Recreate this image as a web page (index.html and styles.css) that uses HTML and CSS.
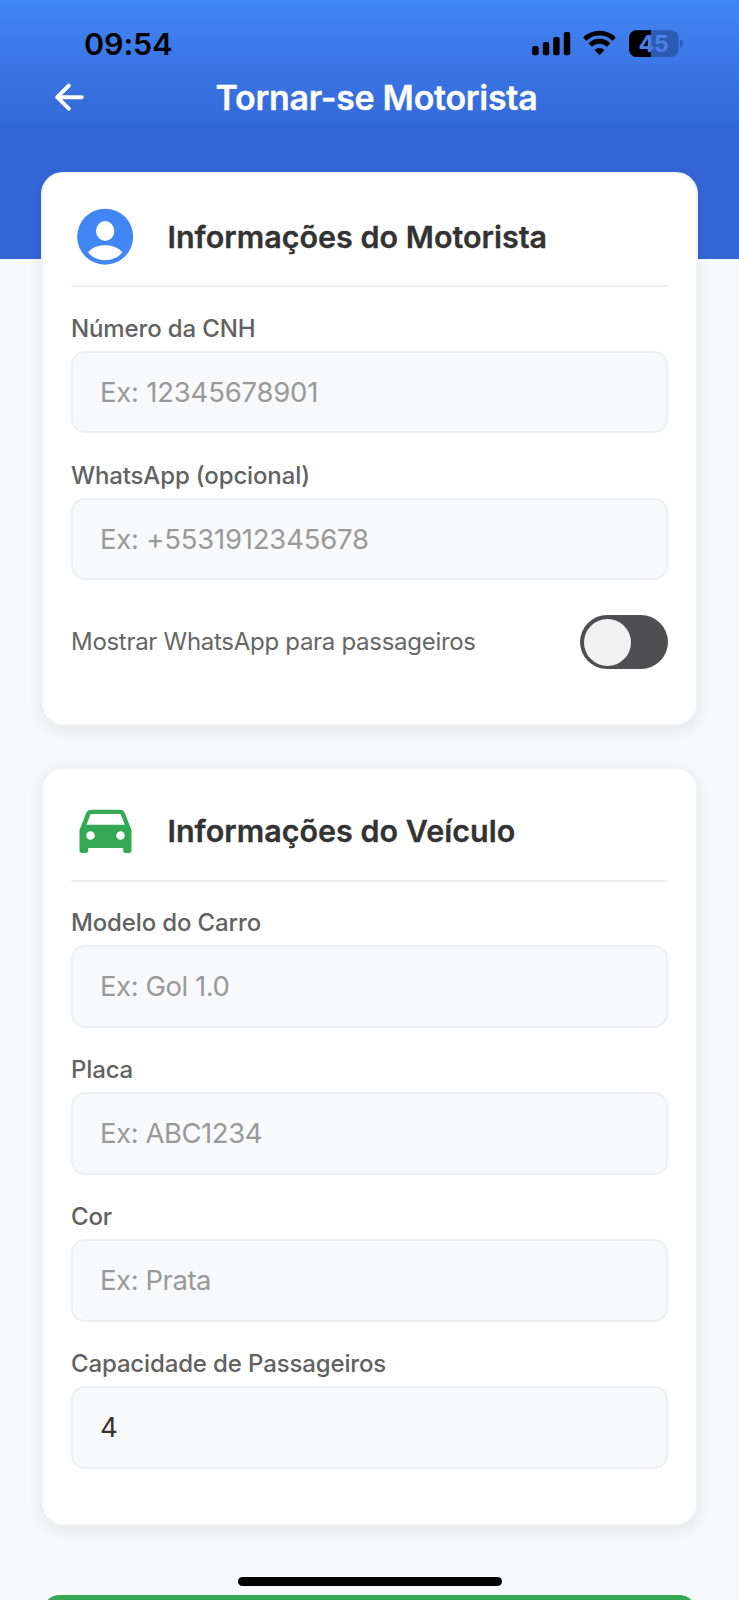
FILE: index.html
```html
<!DOCTYPE html>
<html lang="pt-BR">
<head>
<meta charset="utf-8">
<title>Tornar-se Motorista</title>
<link rel="stylesheet" href="styles.css">
</head>
<body>
<div class="screen">
  <header class="header">
    <div class="status">
      <span class="time">09:54</span>
      <svg class="status-icons" viewBox="532 30 152 28" width="152" height="28">
        <rect x="532.2" y="46" width="6.4" height="9.3" rx="2"/>
        <rect x="542.8" y="42" width="6.4" height="13.3" rx="2"/>
        <rect x="553.2" y="37" width="6.4" height="18.3" rx="2"/>
        <rect x="563.8" y="32" width="6.4" height="23.3" rx="2"/>
        <path fill="none" stroke="#000" stroke-width="4.8" d="M584.8 39.2a21 21 0 0 1 29.4 0M590.2 45a13.4 13.4 0 0 1 18.6 0"/>
        <path d="M599.5 55.2l-5-5.1a7.2 7.2 0 0 1 10 0z"/>
        <clipPath id="cell"><rect x="629" y="30.3" width="49.6" height="26.6" rx="7.5"/></clipPath>
        <g clip-path="url(#cell)">
          <rect x="629" y="30" width="50" height="27" fill="#2c5bb3"/>
          <rect x="629" y="30" width="22" height="27"/>
        </g>
        <path fill="#2c5bb3" d="M680 39.5c4 1.2 4 6.8 0 8z"/>
        <text class="charge" x="638.4" y="52.2">45</text>
      </svg>
    </div>
    <div class="nav">
      <svg class="back" viewBox="0 0 32 32" width="32" height="32"><path d="M28.700 16.200H4.200M15.800 4.700L4.200 16.200L15.800 27.700"/></svg>
      <h1 class="title">Tornar-se Motorista</h1>
    </div>
  </header>

  <main class="content">
    <section class="card">
      <div class="card-head">
        <svg viewBox="3 3 204 204" width="68" height="68">
          <circle cx="105.5" cy="110" r="84" fill="#4285f4"/>
          <ellipse cx="105.5" cy="93" rx="27.5" ry="30" fill="#fff"/>
          <path fill="#fff" d="M54 157C66 143 84 135.5 105.5 135.5S145 143 157 157C145 172 126 180.5 105.5 180.5S66 172 54 157z"/>
        </svg>
        <h2>Informações do Motorista</h2>
      </div>
      <div class="field"><div class="label">Número da CNH</div><div class="input digits">Ex: 12345678901</div></div>
      <div class="field"><div class="label">WhatsApp (opcional)</div><div class="input digits">Ex: +5531912345678</div></div>
      <div class="switch-row"><span>Mostrar WhatsApp para passageiros</span><div class="switch"><div class="knob"></div></div></div>
    </section>

    <section class="card">
      <div class="card-head">
        <svg viewBox="1.500 0 204 204" width="68" height="68">
          <path fill="#34a853" fill-rule="evenodd" d="M62 41H148Q159 41 163 51L183 102V163Q183 171 175 171H166Q158 171 158 163V156H53V163Q53 171 45 171H35Q27 171 27 163V102L47 51Q51 41 62 41zM60 54L48 86H163L150 54zM60 105.5a13 13 0 1 0 0 26a13 13 0 1 0 0-26zM150 105.5a13 13 0 1 0 0 26a13 13 0 1 0 0-26z"/>
        </svg>
        <h2>Informações do Veículo</h2>
      </div>
      <div class="field"><div class="label">Modelo do Carro</div><div class="input">Ex: Gol 1.0</div></div>
      <div class="field"><div class="label">Placa</div><div class="input">Ex: ABC1234</div></div>
      <div class="field"><div class="label">Cor</div><div class="input">Ex: Prata</div></div>
      <div class="field"><div class="label">Capacidade de Passageiros</div><div class="input filled">4</div></div>
    </section>

    <div class="submit"></div>
  </main>
  <div class="home-indicator"></div>
</div>
</body>
</html>
```
FILE: styles.css
```css
* { box-sizing: border-box; }
body {
  margin: 0;
  background: #f8f9fb;
  font-family: Inter, "Liberation Sans", sans-serif;
}
.screen {
  position: relative;
  width: 739px;
  height: 1600px;
  overflow: hidden;
}
.header {
  height: 259px;
  padding-top: 24px;
  background: linear-gradient(#4285f4 0, #3367d6 130px);
}
.status {
  display: flex;
  align-items: center;
  justify-content: space-between;
  height: 40px;
  padding: 0 55px 0 84px;
}
.time {
  font-size: 30.5px;
  font-weight: 600;
  line-height: 40px;
  letter-spacing: -0.1px;
  color: #000;
}
.status-icons { display: block; }
.charge {
  font-size: 23.5px;
  font-weight: 700;
  letter-spacing: -0.5px;
  fill: #4a80e8;
}
.nav {
  display: grid;
  grid-template-columns: 32px 1fr 32px;
  align-items: center;
  height: 65px;
  padding: 0 39px 0 53px;
}
.back {
  fill: none;
  stroke: #fff;
  stroke-width: 4;
  stroke-linecap: round;
  stroke-linejoin: round;
}
.title {
  margin: 0;
  padding-top: 2px;
  color: #fff;
  font-size: 34px;
  font-weight: 600;
  line-height: 42px;
  letter-spacing: -0.3px;
  text-align: center;
  -webkit-text-stroke: 0.3px #fff;
}
.content {
  display: flex;
  flex-direction: column;
  gap: 40.5px;
  margin-top: -87px;
  padding: 0 41px;
}
.card {
  padding: 27px 28px 55px;
  border: 2px solid #f2f2f2;
  border-radius: 22px;
  background: #fff;
  box-shadow: 0 4px 15px rgba(0, 0, 0, 0.09);
}
.card-head {
  display: flex;
  align-items: center;
  gap: 28.5px;
  margin-bottom: -0.6px;
  padding-bottom: 16px;
  border-bottom: 2px solid #eee;
}
.card-head svg { display: block; }
.card-head h2 {
  margin: 0;
  padding-top: 3px;
  color: #333;
  font-size: 30.5px;
  font-weight: 600;
  line-height: 38px;
  letter-spacing: 0;
  -webkit-text-stroke: 0.3px #333;
}
.field { margin-top: 27.5px; }
.label {
  margin-bottom: 7px;
  color: #626262;
  font-size: 24px;
  font-weight: 500;
  line-height: 30px;
  letter-spacing: -0.14px;
}
.input {
  height: 82.5px;
  padding: 0 27px;
  border: 2px solid #eeeff0;
  border-radius: 14px;
  background: #f8f9fb;
  color: #999;
  font-size: 27.5px;
  line-height: 78.5px;
  letter-spacing: -0.45px;
}
.input.digits { letter-spacing: -0.22px; }
.input.filled { color: #333; }
.switch-row {
  display: flex;
  align-items: center;
  justify-content: space-between;
  margin-top: 34.6px;
  color: #666;
  font-size: 24px;
  line-height: 30px;
  letter-spacing: -0.29px;
}
.switch {
  width: 88px;
  height: 54px;
  padding: 3.5px;
  border-radius: 27px;
  background: #4f4f51;
}
.knob {
  width: 47px;
  height: 47px;
  border-radius: 50%;
  background: #f2f2f2;
}
.submit {
  height: 94px;
  margin: 28.6px 1px 0;
  border-radius: 18px;
  background: #34a853;
}
.home-indicator {
  position: absolute;
  left: 238px;
  top: 1577px;
  width: 264px;
  height: 9px;
  border-radius: 5px;
  background: #000;
}
```
